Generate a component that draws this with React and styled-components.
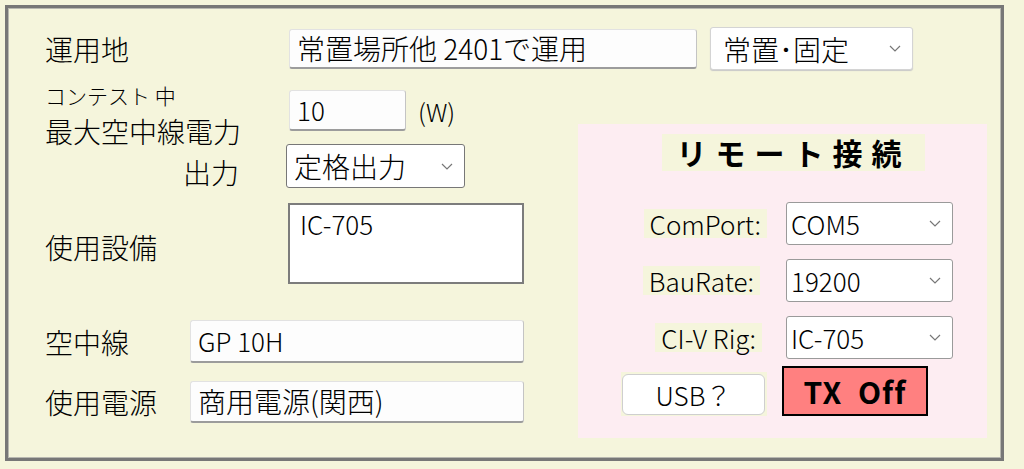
import React from 'react'
import styled, { createGlobalStyle } from 'styled-components'

const GlobalStyle = createGlobalStyle`
  html, body {
    margin: 0;
    padding: 0;
    background: #f5f5dc;
    font-family: "Noto Sans CJK JP", "Noto Sans", sans-serif;
    font-weight: 300;
    color: #000;
  }
`;

const Frame = styled.div`
  margin: 5px;
  width: 999px;
  height: 456px;
  box-sizing: border-box;
  border: 3px solid #777;
  box-shadow: inset 0 0 0 1px #b8b8b0;
  padding: 19px 0 0 37px;
`;

const Row = styled.div`
  display: flex;
  align-items: center;
  margin-top: ${p => p.top || 0}px;
`;

const Label = styled.div`
  flex: none;
  width: ${p => p.width}px;
  font-size: ${p => p.size || 28}px;
  line-height: ${p => p.lh || 36}px;
  padding-left: ${p => p.indent || 0}px;
  padding-top: ${p => p.dy || 0}px;
  box-sizing: border-box;
  white-space: nowrap;
`;

const TextBox = styled.div`
  flex: none;
  box-sizing: border-box;
  width: ${p => p.width}px;
  height: ${p => p.height}px;
  margin-left: ${p => p.left || 0}px;
  background: #fdfdfd;
  border: 1px solid #e2e2e2;
  border-right-color: #c4c4c4;
  border-bottom: 2px solid #9c9c9c;
  border-radius: 3px;
  padding-left: 7px;
  font-size: ${p => p.size || 28}px;
  line-height: ${p => p.height - 4}px;
  white-space: nowrap;
`;

const Memo = styled.div`
  flex: none;
  box-sizing: border-box;
  width: 236px;
  height: 81px;
  background: #fff;
  border: 2px solid #7c7c7c;
  padding: 2px 10px;
  font-size: 26px;
  line-height: 34px;
`;

const Combo = styled.div`
  flex: none;
  display: flex;
  align-items: center;
  justify-content: space-between;
  box-sizing: border-box;
  width: ${p => p.width}px;
  height: ${p => p.height}px;
  margin-left: ${p => p.left || 0}px;
  background: #fff;
  border: 1px solid ${p => p.edge || '#9a9a9a'};
  border-radius: 3px;
  box-shadow: ${p => p.soft ? '0 1px 1px #c8c8c8' : 'none'};
  padding: 0 11px 0 ${p => p.pad || 4}px;
  font-size: ${p => p.size || 26}px;
  white-space: nowrap;

  svg {
    flex: none;
  }
`;

const Unit = styled.span`
  margin-left: 12px;
  font-size: 25px;
`;

const Body = styled.div`
  display: flex;
  align-items: flex-start;
`;

const LeftColumn = styled.div`
  flex: none;
  width: 533px;
`;

const ContestBlock = styled.div`
  display: flex;
  margin-top: 15px;
`;

const LabelStack = styled.div`
  flex: none;
  width: 244px;
`;

const FieldStack = styled.div`
  display: flex;
  flex-direction: column;
  align-items: flex-start;
`;

const Panel = styled.div`
  flex: none;
  width: 409px;
  height: 314px;
  margin-top: 54px;
  background: #fdedf2;
  box-sizing: border-box;
  padding-top: 10px;
`;

const Title = styled.div`
  width: 263px;
  height: 37px;
  margin-left: 84px;
  background: #f5f5dc;
  font-size: 30px;
  font-weight: 700;
  line-height: 37px;
  letter-spacing: 9px;
  text-align: center;
  white-space: nowrap;
`;

const PortGrid = styled.div`
  display: grid;
  grid-template-columns: 189px 167px;
  grid-auto-rows: 43px;
  column-gap: 19px;
  row-gap: 14px;
  margin-top: 31px;
  align-items: center;

  & > :last-child,
  & > :nth-last-child(2) {
    align-self: end;
  }
`;

const PortLabel = styled.div`
  justify-self: end;
  margin-right: ${p => p.shift || 0}px;
  height: 29px;
  padding: 0 6px;
  background: #f5f5dc;
  font-size: 26px;
  line-height: 29px;
  white-space: nowrap;
`;

const UsbWrap = styled.div`
  justify-self: end;
  width: 146px;
  height: 44px;
  background: #f5f5dc;
  box-sizing: border-box;
  padding: 2px 2px 1px 1px;
`;

const UsbButton = styled.button`
  display: block;
  width: 100%;
  height: 100%;
  margin: 0;
  background: #fff;
  border: 1px solid #cfcfcf;
  border-radius: 6px;
  font-family: inherit;
  font-weight: 300;
  font-size: 26px;
  color: #000;
  padding: 0;
  line-height: 1;
`;

const TxButton = styled.button`
  width: 146px;
  height: 50px;
  margin: 0 0 0 -4px;
  background: #ff8080;
  border: 2px solid #000;
  font-family: inherit;
  font-size: 30px;
  font-weight: 700;
  letter-spacing: 1px;
  white-space: pre;
  color: #000;
  padding: 0;
  line-height: 1;
`;

const Chevron = () => (
  <svg width="12" height="7" viewBox="0 0 12 7">
    <polyline points="1,1 6,6 11,1" fill="none" stroke="#777" strokeWidth="1.2" />
  </svg>
);

const ports = [
  { label: 'ComPort:', value: 'COM5', shift: 0 },
  { label: 'BauRate:', value: '19200', shift: 7 },
  { label: 'CI-V Rig:', value: 'IC-705', shift: 5 },
];

const App = () => {
  return (
    <>
      <GlobalStyle />
      <Frame>
        <Row>
          <Label width={244} size={28}>運用地</Label>
          <TextBox width={408} height={40}>常置場所他 2401で運用</TextBox>
          <Combo width={203} height={43} left={13} pad={12} edge="#d4d4d4" soft size={28}>
            常置･固定
            <Chevron />
          </Combo>
        </Row>

        <Body>
          <LeftColumn>
            <ContestBlock>
              <LabelStack>
                <Label size={21} lh={20}>コンテスト 中</Label>
                <Label size={28} lh={52}>最大空中線電力</Label>
                <Label size={28} lh={30} indent={138}>出力</Label>
              </LabelStack>
              <FieldStack>
                <Row top={5}>
                  <TextBox width={117} height={41} size={26}>10</TextBox>
                  <Unit>(W)</Unit>
                </Row>
                <Row top={13}>
                  <Combo width={179} height={44} left={-3} pad={7} edge="#777" size={28}>
                    定格出力
                    <Chevron />
                  </Combo>
                </Row>
              </FieldStack>
            </ContestBlock>

            <Row top={15}>
              <Label width={243} dy={6}>使用設備</Label>
              <Memo>IC-705</Memo>
            </Row>

            <Row top={36}>
              <Label width={145}>空中線</Label>
              <TextBox width={334} height={43} size={26}>GP 10H</TextBox>
            </Row>

            <Row top={18}>
              <Label width={145}>使用電源</Label>
              <TextBox width={334} height={42}>商用電源(関西)</TextBox>
            </Row>
          </LeftColumn>

          <Panel>
            <Title>リモート接続</Title>
            <PortGrid>
              {ports.map(p => (
                <React.Fragment key={p.label}>
                  <PortLabel shift={p.shift}>{p.label}</PortLabel>
                  <Combo width={167} height={43} edge="#9a9a9a">
                    {p.value}
                    <Chevron />
                  </Combo>
                </React.Fragment>
              ))}
              <UsbWrap>
                <UsbButton>USB？</UsbButton>
              </UsbWrap>
              <TxButton>{'TX  Off'}</TxButton>
            </PortGrid>
          </Panel>
        </Body>
      </Frame>
    </>
  )
}

export default App;
